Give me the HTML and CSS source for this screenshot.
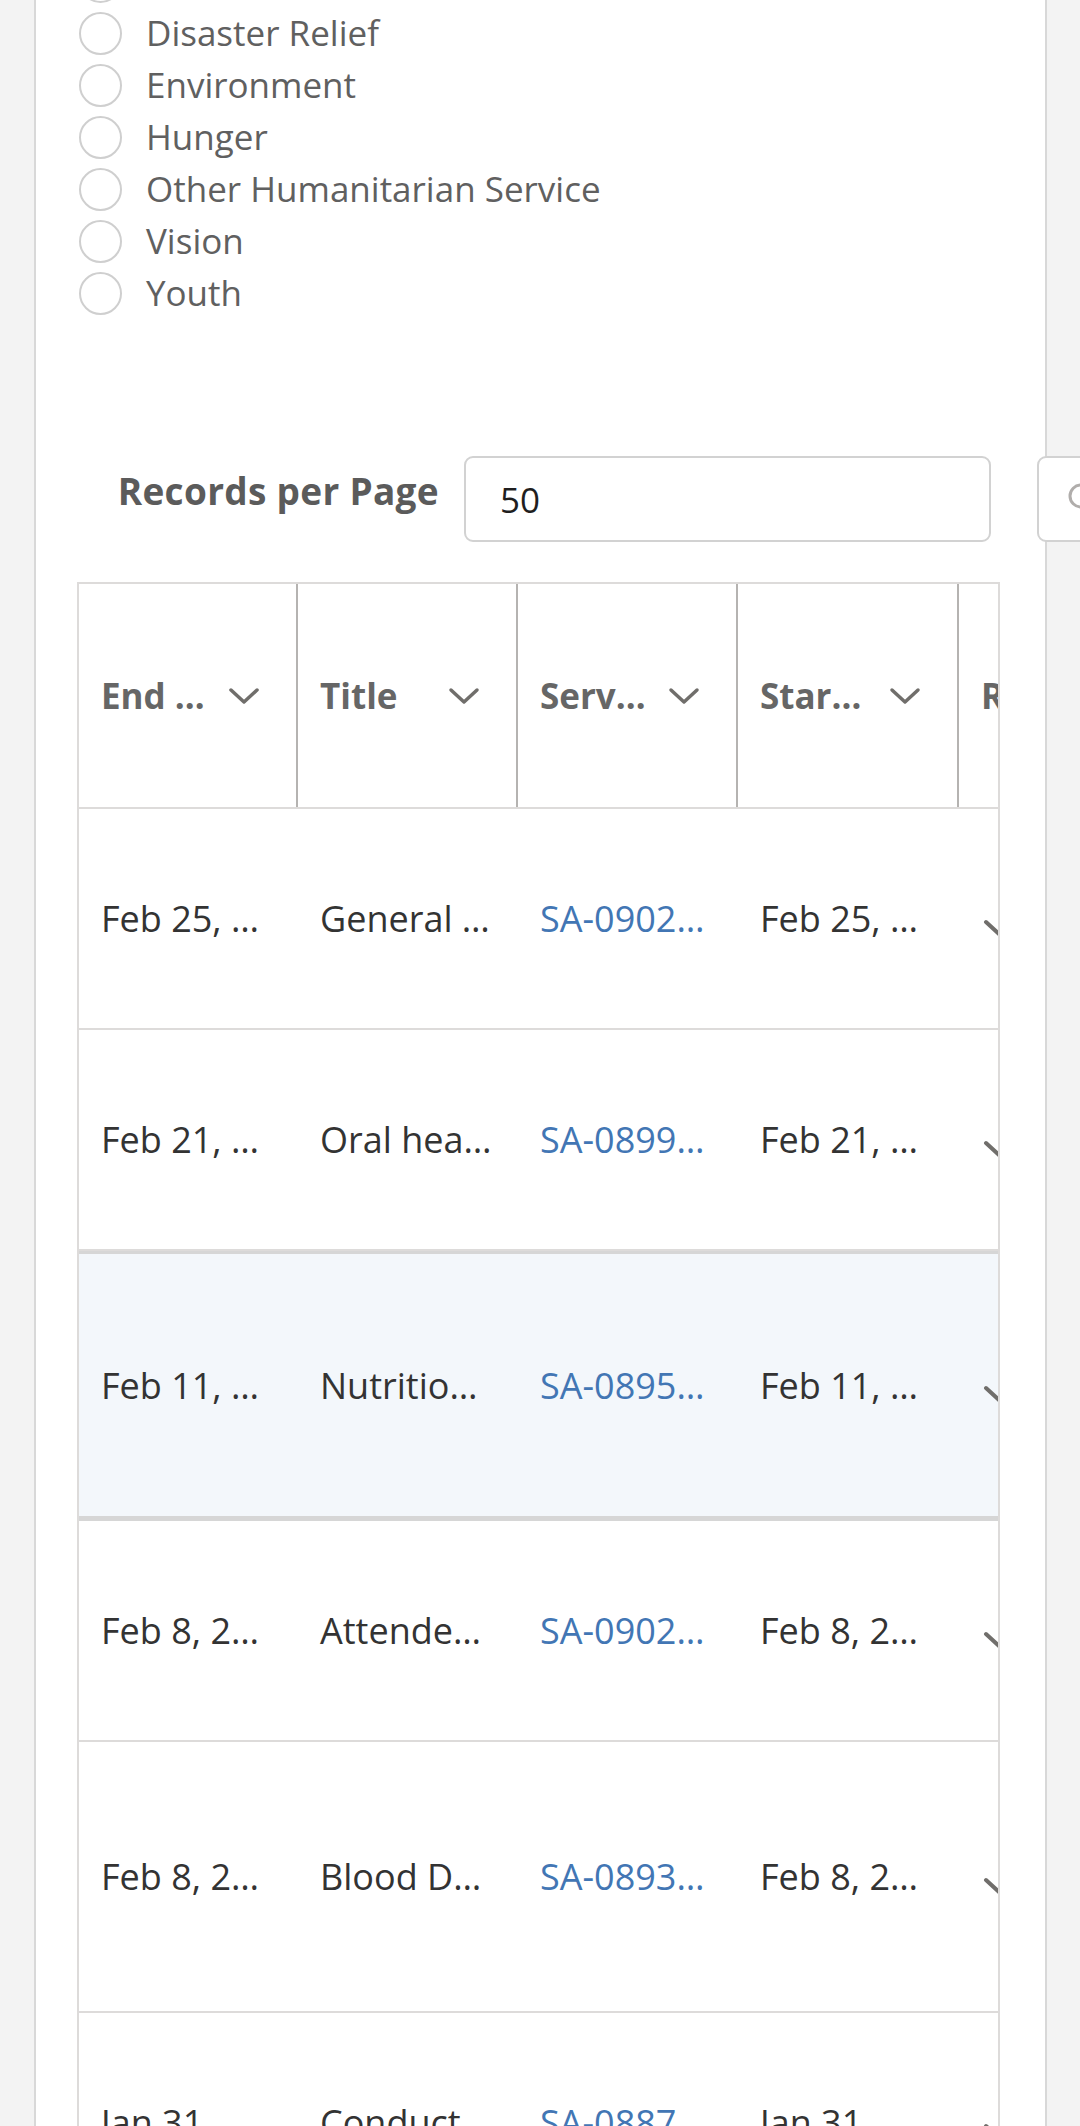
FILE: index.html
```html
<!DOCTYPE html>
<html lang="en">
<head>
  <meta charset="UTF-8">
  <meta name="viewport" content="width=device-width, initial-scale=1.0">
  <title>Service Activities</title>
<link rel="stylesheet" href="styles.css">
</head>
<body>
    <div class="card">
        <ul class="cause-list">
            <li class="cause"><span class="radio"></span><span class="cause-label">Diabetes</span></li>
            <li class="cause"><span class="radio"></span><span class="cause-label">Disaster Relief</span></li>
            <li class="cause"><span class="radio"></span><span class="cause-label">Environment</span></li>
            <li class="cause"><span class="radio"></span><span class="cause-label">Hunger</span></li>
            <li class="cause"><span class="radio"></span><span class="cause-label">Other Humanitarian Service</span></li>
            <li class="cause"><span class="radio"></span><span class="cause-label">Vision</span></li>
            <li class="cause"><span class="radio"></span><span class="cause-label">Youth</span></li>
        </ul>

        <div class="toolbar">
            <div class="rpp-label">Records per Page</div>
            <div class="rpp-input">50</div>
            <div class="search-input">
                <svg class="search-icon" width="32" height="32" viewBox="0 0 32 32">
                    <circle cx="13" cy="13" r="11" fill="none" stroke="#b0adab" stroke-width="3"/>
                    <line x1="21" y1="21" x2="29" y2="29" stroke="#b0adab" stroke-width="3" stroke-linecap="round"/>
                </svg>
            </div>
        </div>

        <div class="table-wrap">
            <div class="dt-row dt-head">
                <div class="th"><span>End …</span><svg class="chev" width="32" height="18" viewBox="0 0 32 18"><polyline points="3,3 16,15 29,3" fill="none" stroke="#706e6b" stroke-width="3.5" stroke-linecap="round" stroke-linejoin="round"/></svg></div>
                <div class="th"><span>Title</span><svg class="chev" width="32" height="18" viewBox="0 0 32 18"><polyline points="3,3 16,15 29,3" fill="none" stroke="#706e6b" stroke-width="3.5" stroke-linecap="round" stroke-linejoin="round"/></svg></div>
                <div class="th"><span>Serv…</span><svg class="chev" width="32" height="18" viewBox="0 0 32 18"><polyline points="3,3 16,15 29,3" fill="none" stroke="#706e6b" stroke-width="3.5" stroke-linecap="round" stroke-linejoin="round"/></svg></div>
                <div class="th"><span>Star…</span><svg class="chev" width="32" height="18" viewBox="0 0 32 18"><polyline points="3,3 16,15 29,3" fill="none" stroke="#706e6b" stroke-width="3.5" stroke-linecap="round" stroke-linejoin="round"/></svg></div>
                <div class="th"><span>Role</span></div>
                <div class="th"><span>Hours</span></div>
            </div>
            <div id="rows"></div>
        </div>
    </div>

    <script>
        const records = [
            { end: 'Feb 25, …', title: 'General …', id: 'SA-0902…', start: 'Feb 25, …', size: '' },
            { end: 'Feb 21, …', title: 'Oral hea…', id: 'SA-0899…', start: 'Feb 21, …', size: '' },
            { end: 'Feb 11, …', title: 'Nutritio…', id: 'SA-0895…', start: 'Feb 11, …', size: 'selected' },
            { end: 'Feb 8, 2…', title: 'Attende…', id: 'SA-0902…', start: 'Feb 8, 2…', size: '' },
            { end: 'Feb 8, 2…', title: 'Blood D…', id: 'SA-0893…', start: 'Feb 8, 2…', size: 'tall' },
            { end: 'Jan 31, …', title: 'Conduct…', id: 'SA-0887…', start: 'Jan 31, …', size: '' },
            { end: 'Jan 27, …', title: 'Eye scre…', id: 'SA-0881…', start: 'Jan 27, …', size: '' }
        ];

        // 테이블 행 그리기
        function renderRows() {
            const rows = document.getElementById('rows');
            records.forEach(rec => {
                const row = document.createElement('div');
                row.className = `dt-row ${rec.size}`;
                row.innerHTML =
                    `<div class="td">${rec.end}</div>` +
                    `<div class="td">${rec.title}</div>` +
                    `<div class="td"><a class="link" href="#">${rec.id}</a></div>` +
                    `<div class="td">${rec.start}</div>` +
                    `<div class="td"><svg class="row-chev" width="32" height="18" viewBox="0 0 32 18"><polyline points="3,3 16,15 29,3" fill="none" stroke="#706e6b" stroke-width="4" stroke-linecap="round" stroke-linejoin="round"/></svg></div>` +
                    `<div class="td"></div>`;
                rows.appendChild(row);
            });
        }

        renderRows();
    </script>
</body>
</html>
```

FILE: styles.css
```css
body {
    font-family: "Open Sans", "Noto Sans", sans-serif;
    background-color: #f3f3f3;
    margin: 0;
    overflow: hidden;
}
.card {
    margin-left: 34px;
    width: 1013px;
    box-sizing: border-box;
    min-height: 2300px;
    background-color: white;
    border-left: 2px solid #d8d8d8;
    border-right: 2px solid #d8d8d8;
}
.cause-list {
    list-style: none;
    margin: 0;
    padding: 0 0 0 43px;
    position: relative;
    top: -45px;
    margin-bottom: -45px;
}
.cause {
    display: flex;
    align-items: center;
    height: 52px;
}
.radio {
    width: 43px;
    height: 43px;
    box-sizing: border-box;
    border: 2px solid #cfcfcf;
    border-radius: 50%;
    flex-shrink: 0;
}
.cause-label {
    margin-left: 24px;
    font-size: 35px;
    color: #606060;
    margin-top: -2px;
}
.toolbar {
    display: flex;
    align-items: center;
    margin-top: 137px;
    height: 86px;
}
.rpp-label {
    width: 403px;
    flex-shrink: 0;
    text-align: right;
    font-size: 37px;
    font-weight: bold;
    letter-spacing: 0.3px;
    color: #5b5b5b;
    padding-bottom: 18px;
}
.rpp-input {
    margin-left: 25px;
    width: 527px;
    height: 86px;
    box-sizing: border-box;
    flex-shrink: 0;
    border: 2px solid #d2d2d2;
    border-radius: 9px;
    padding-left: 34px;
    display: flex;
    align-items: center;
    font-size: 35px;
    color: #1f1f1f;
}
.search-input {
    margin-left: 46px;
    width: 400px;
    height: 86px;
    box-sizing: border-box;
    flex-shrink: 0;
    border: 2px solid #d2d2d2;
    border-radius: 9px;
    background-color: white;
    padding-left: 29px;
    display: flex;
    align-items: center;
}
.table-wrap {
    margin-top: 40px;
    margin-left: 41px;
    width: 923px;
    box-sizing: border-box;
    border: 2px solid #dddbda;
    border-bottom: none;
    overflow: hidden;
}
.dt-row {
    display: grid;
    grid-template-columns: 219px 220px 220px 221px 220px 220px;
    width: 1320px;
    height: 221px;
    box-sizing: border-box;
    border-bottom: 2px solid #dddbda;
}
.dt-row.dt-head {
    height: 225px;
}
.dt-row.selected {
    height: 270px;
    background-color: #f3f7fb;
    border-top: 3px solid #d6d6d6;
    border-bottom: 5px solid #d6d6d6;
}
.dt-row.tall {
    height: 271px;
}
.th {
    display: flex;
    align-items: center;
    justify-content: space-between;
    padding: 0 36px 0 22px;
    border-right: 2px solid #b5b3b1;
    font-size: 35px;
    font-weight: bold;
    color: #666666;
    white-space: nowrap;
    overflow: hidden;
}
.chev {
    flex-shrink: 0;
}
.td {
    display: flex;
    align-items: center;
    padding-left: 22px;
    font-size: 36px;
    color: #333333;
    white-space: nowrap;
    overflow: hidden;
}
.link {
    color: #4276b4;
    text-decoration: none;
}
.row-chev {
    margin-top: 18px;
    margin-left: 2px;
}
```
